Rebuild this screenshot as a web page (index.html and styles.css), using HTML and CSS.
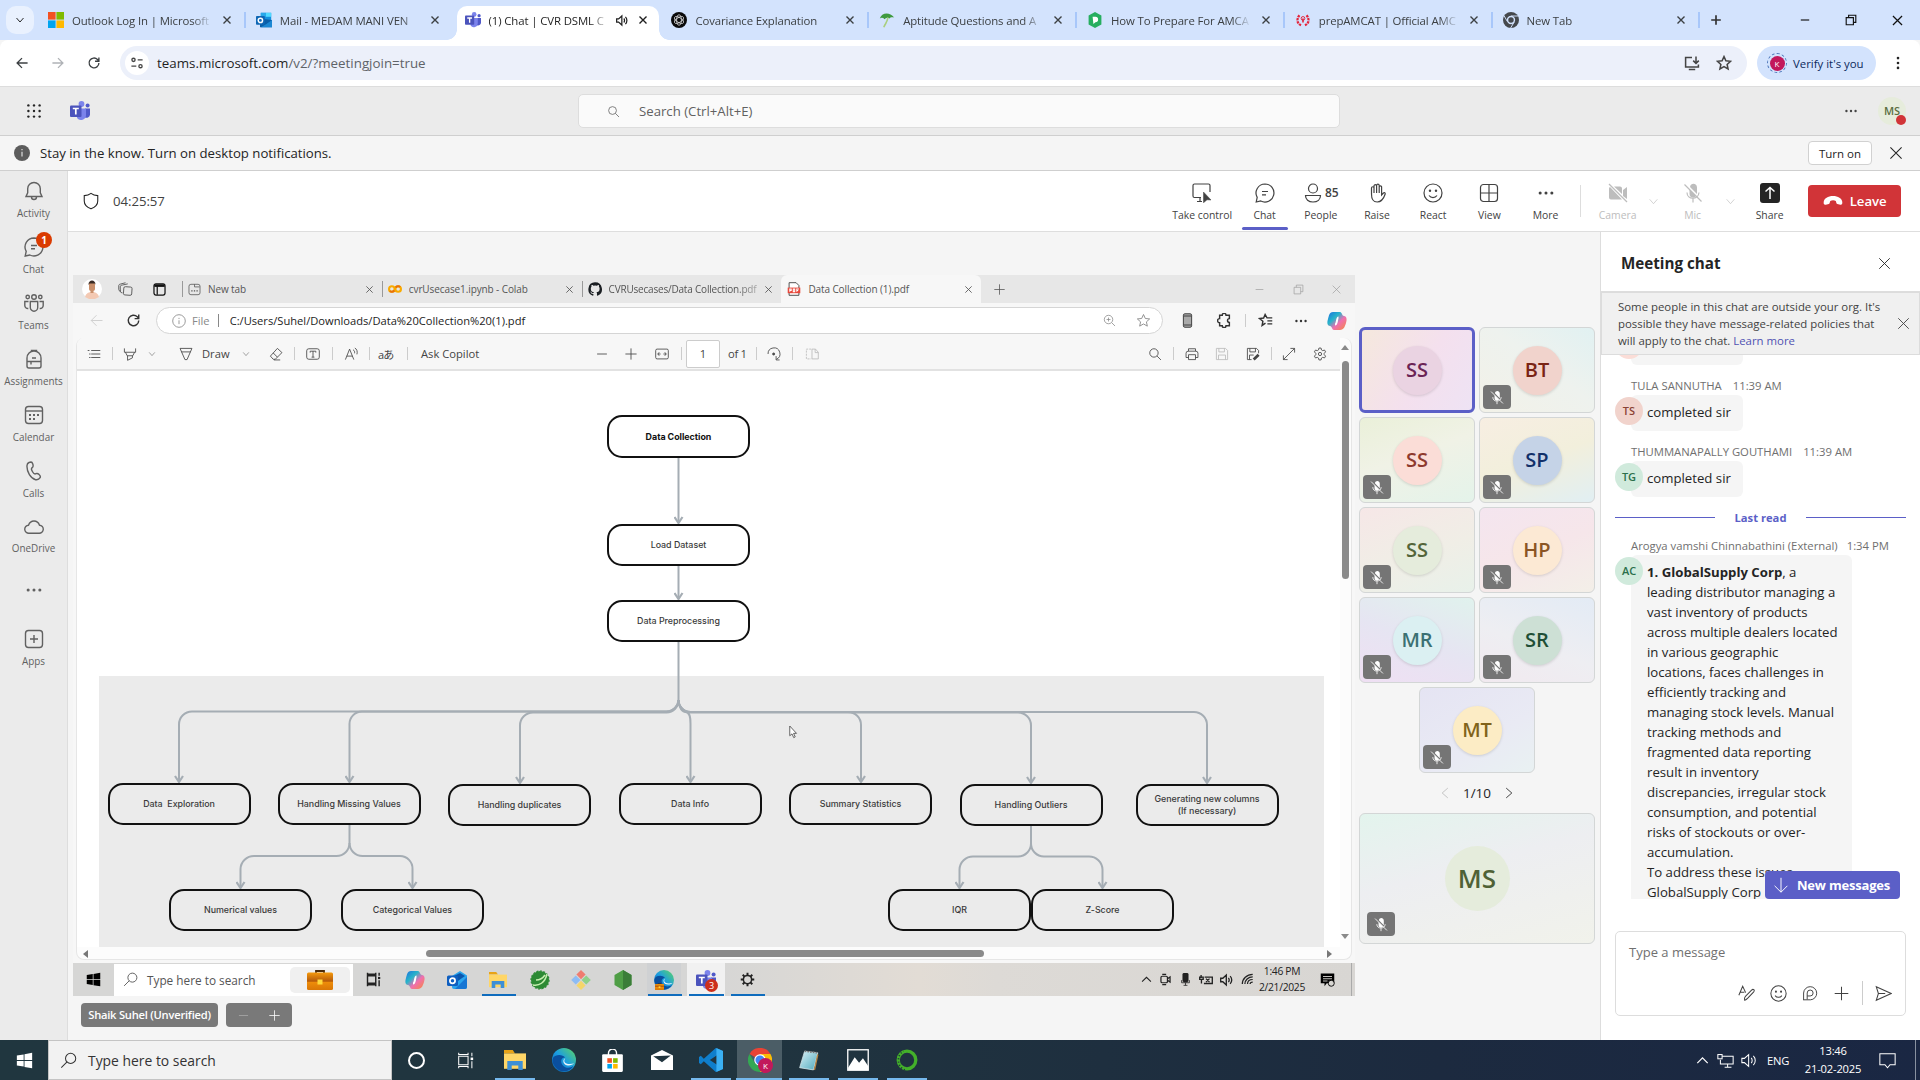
FILE: index.html
```html
<!DOCTYPE html>
<html lang="en">
<head>
<meta charset="utf-8">
<title>(1) Chat | CVR DSML | Microsoft Teams</title>
<link rel="stylesheet" href="styles.css">
</head>
<body>
<svg class="sprite" aria-hidden="true">
  <linearGradient id="cop" x1="0" y1="0" x2="1" y2="1"><stop offset="0" stop-color="#1b6fe0"/><stop offset=".35" stop-color="#27b5c9"/><stop offset=".6" stop-color="#f06fb0"/><stop offset="1" stop-color="#f58a3c"/></linearGradient>
  <linearGradient id="edg" x1="0" y1="1" x2="1" y2="0"><stop offset="0" stop-color="#0c59a4"/><stop offset=".5" stop-color="#1b9de2"/><stop offset="1" stop-color="#5fd85f"/></linearGradient>
  <linearGradient id="bag" x1="0" y1="0" x2="0" y2="1"><stop offset="0" stop-color="#f59a0c"/><stop offset=".5" stop-color="#b5590a"/><stop offset=".55" stop-color="#ee8d0a"/><stop offset="1" stop-color="#d97706"/></linearGradient>
  <linearGradient id="pad" x1="0" y1="0" x2="1" y2="1"><stop offset="0" stop-color="#d8f1f6"/><stop offset="1" stop-color="#4fa9bd"/></linearGradient>
  <symbol id="x" viewBox="0 0 20 20"><path d="M3 3l14 14M17 3L3 17"/></symbol>
  <symbol id="plus" viewBox="0 0 20 20"><path d="M10 2v16M2 10h16"/></symbol>
  <symbol id="minus" viewBox="0 0 20 20"><path d="M3 10h14"/></symbol>
  <symbol id="down" viewBox="0 0 20 20"><path d="M3 6l7 8 7-8"/></symbol>
  <symbol id="up" viewBox="0 0 20 20"><path d="M2 14l8-8 8 8"/></symbol>
  <symbol id="left" viewBox="0 0 20 20"><path d="M14 3L6 10l8 7"/></symbol>
  <symbol id="right" viewBox="0 0 20 20"><path d="M6 3l8 7-8 7"/></symbol>
  <symbol id="back" viewBox="0 0 20 20"><path d="M18 10H3M10 3l-7 7 7 7"/></symbol>
  <symbol id="fwd" viewBox="0 0 20 20"><path d="M2 10h15M10 3l7 7-7 7"/></symbol>
  <symbol id="reload" viewBox="0 0 20 20"><path d="M17 10a7 7 0 1 1-2-5l2 2M17 2v5.500h-5.500"/></symbol>
  <symbol id="search" viewBox="0 0 20 20"><circle cx="8.500" cy="8.500" r="6"/><path d="M13 13l5.500 5.500"/></symbol>
  <symbol id="wsearch" viewBox="0 0 20 20"><circle cx="12.500" cy="7.500" r="6"/><path d="M8.300 11.700L1.500 18.500"/></symbol>
  <symbol id="dots" viewBox="0 0 20 20"><g fill="currentColor" stroke="none"><circle cx="3.500" cy="10" r="1.700"/><circle cx="10" cy="10" r="1.700"/><circle cx="16.500" cy="10" r="1.700"/></g></symbol>
  <symbol id="vdots" viewBox="0 0 20 20"><g fill="currentColor" stroke="none"><circle cx="10" cy="3" r="1.900"/><circle cx="10" cy="10" r="1.900"/><circle cx="10" cy="17" r="1.900"/></g></symbol>
  <symbol id="star" viewBox="0 0 20 20"><path d="M10 2l2.400 5.300 5.800.6-4.300 3.900 1.200 5.700L10 14.600l-5.100 2.900 1.200-5.700L1.800 7.900l5.800-.6z"/></symbol>
  <symbol id="win" viewBox="0 0 20 20"><path fill="currentColor" stroke="none" d="M1 4l8-1.200v6.700H1zM10 2.600L19 1v8.500h-9zM1 10.500h8v6.700L1 16zM10 10.500h9V19l-9-1.400z"/></symbol>
  <symbol id="ms" viewBox="0 0 20 20"><g stroke="none"><path fill="#f25022" d="M0 0h9.500v9.500H0z"/><path fill="#7fba00" d="M10.500 0H20v9.500h-9.500z"/><path fill="#00a4ef" d="M0 10.500h9.500V20H0z"/><path fill="#ffb900" d="M10.500 10.500H20V20h-9.500z"/></g></symbol>
  <symbol id="outlook" viewBox="0 0 20 20"><g stroke="none"><path fill="#1490df" d="M6 1h13v9H6z"/><path fill="#28a8ea" d="M6 1h6.500v5H6z"/><path fill="#50d9ff" d="M12.500 1H19v5h-6.500z"/><path fill="#0a5ea8" d="M5 8l15 2v9H5z"/><path fill="#1b87d3" d="M20 10v9H6l7-4z"/><rect y="5" width="11" height="11" rx="1" fill="#0f67b5"/></g><circle cx="5.500" cy="10.500" r="2.700" stroke="#fff" stroke-width="1.800"/></symbol>
  <symbol id="outlook2" viewBox="0 0 20 20"><g stroke="none"><path fill="#2aa5ee" d="M5 6l8-5 7 4.500V17a2 2 0 0 1-2 2H7a2 2 0 0 1-2-2z"/><path fill="#0b56ad" d="M5 7l8-4 5 3-10 7z"/><path fill="#1676d4" d="M20 7v10a2 2 0 0 1-2 2H8z"/><rect y="5.500" width="11" height="10.500" rx="1.500" fill="#0f5fc0"/></g><circle cx="5.500" cy="10.700" r="2.600" stroke="#fff" stroke-width="1.700"/></symbol>
  <symbol id="teams" viewBox="0 0 20 20"><g stroke="none"><circle cx="17.600" cy="4.600" r="2" fill="#5059c9"/><circle cx="11.500" cy="3" r="2.900" fill="#7b83eb"/><path fill="#5059c9" d="M15 7.500h5v6a3.500 3.500 0 0 1-5 3z"/><path fill="#7b83eb" d="M8 7.500h8v6.500a5 5 0 0 1-9 3z"/><rect y="4.500" width="11.500" height="11.500" rx="1" fill="#4b53bc"/></g><path stroke="#fff" stroke-width="1.700" d="M2.800 7.500h6M5.800 7.500v6"/></symbol>
  <symbol id="gpt" viewBox="0 0 20 20"><circle cx="10" cy="10" r="10" fill="#0b0b0b" stroke="none"/><g stroke="#d8d8d8" stroke-width="1"><ellipse cx="10" cy="10" rx="3" ry="6.500"/><ellipse cx="10" cy="10" rx="3" ry="6.500" transform="rotate(60 10 10)"/><ellipse cx="10" cy="10" rx="3" ry="6.500" transform="rotate(120 10 10)"/></g></symbol>
  <symbol id="umb" viewBox="0 0 20 20"><path fill="#3f9a3f" stroke="none" d="M1 8C3 1 13-1 19 7c-3-1-5 0-6 1-2-1-4-1-6 1-2-2-4-2-6-1z"/><path stroke="#a9cf7f" stroke-width="2" d="M11 7c0 5-3 7-5 12"/></symbol>
  <symbol id="prep" viewBox="0 0 20 20"><path fill="#27ae60" stroke="none" d="M10 0l8 4.500v11L10 20l-8-4.500v-11z"/><path fill="#fff" stroke="none" d="M7 6h3.500a3.400 3.400 0 0 1 0 6.800L8 15z"/></symbol>
  <symbol id="amcat" viewBox="0 0 20 20"><path stroke="#e3243b" stroke-width="2.800" stroke-dasharray="3 1" d="M5.500 4c-4 5-3 11 3 13M14.500 4c4 5 3 11-3 13"/><path stroke="#e3243b" stroke-width="2" d="M10 13V8"/><circle cx="10" cy="8" r="2.300" stroke="#e3243b"/></symbol>
  <symbol id="chromeg" viewBox="0 0 20 20"><circle cx="10" cy="10" r="10" fill="#45484c" stroke="none"/><circle cx="10" cy="10" r="4.300" stroke="#d3e3fd" stroke-width="1.800" fill="#45484c"/><path stroke="#d3e3fd" d="M10 5h9M5.500 12L1.500 5M14 12.500L9.500 20"/></symbol>
  <symbol id="chrome" viewBox="0 0 20 20"><g stroke="none"><path fill="#ea4335" d="M10 10L1.300 5a10 10 0 0 1 17.400 0z"/><path fill="#34a853" d="M10 10v10A10 10 0 0 1 1.300 5l4.400 7.500z"/><path fill="#fbbc05" d="M14.300 12.500L10 20a10 10 0 0 0 8.700-15H10z"/><circle cx="10" cy="10" r="4.800" fill="#fff"/><circle cx="10" cy="10" r="3.800" fill="#4285f4"/></g></symbol>
  <symbol id="sound" viewBox="0 0 20 20"><path d="M1 7.500h3L9 3v14l-5-4.500H1zM12 7c1.500 1.500 1.500 4.500 0 6M14.500 4.500c3 3 3 8 0 11"/></symbol>
  <symbol id="restore" viewBox="0 0 20 20"><path d="M2 6h12v12H2zM6 6V2h12v12h-4"/></symbol>
  <symbol id="tune" viewBox="0 0 20 20"><circle cx="5" cy="5.500" r="2.300"/><path d="M11 5.500h7M2 14.500h7"/><circle cx="15" cy="14.500" r="2.300"/></symbol>
  <symbol id="install" viewBox="0 0 20 20"><path d="M10 3H2v12h16v-3M6 18h8M15 2v8M11.500 7l3.500 3.500L18.500 7"/></symbol>
  <symbol id="waffle" viewBox="0 0 20 20"><g fill="currentColor" stroke="none"><circle cx="3" cy="3" r="1.500"/><circle cx="10" cy="3" r="1.500"/><circle cx="17" cy="3" r="1.500"/><circle cx="3" cy="10" r="1.500"/><circle cx="10" cy="10" r="1.500"/><circle cx="17" cy="10" r="1.500"/><circle cx="3" cy="17" r="1.500"/><circle cx="10" cy="17" r="1.500"/><circle cx="17" cy="17" r="1.500"/></g></symbol>
  <symbol id="infof" viewBox="0 0 20 20"><circle cx="10" cy="10" r="10" fill="#5c5c5c" stroke="none"/><path stroke="#ddd" stroke-width="1.500" d="M10 8.500v6M10 5v1.700"/></symbol>
  <symbol id="info" viewBox="0 0 20 20"><circle cx="10" cy="10" r="9"/><path d="M10 9v5.500M10 5.500v1.700"/></symbol>
  <symbol id="bell" viewBox="0 0 20 20"><path d="M10 1.500a6.300 6.300 0 0 0-6.300 6.300v4L2 15.500h16l-1.700-3.700v-4A6.300 6.300 0 0 0 10 1.500zM7.500 16a2.500 2.500 0 0 0 5 0"/></symbol>
  <symbol id="chat" viewBox="0 0 20 20"><path d="M10 1a9 9 0 1 1-4.200 17L1.200 19l1-4.600A9 9 0 0 1 10 1zM7 8.500h6M7 11.800h4"/></symbol>
  <symbol id="people3" viewBox="0 0 20 20"><circle cx="10" cy="4" r="2.300"/><circle cx="3.700" cy="4" r="1.700"/><circle cx="16.300" cy="4" r="1.700"/><path d="M6.300 8.500h7.400v6a3.700 3.700 0 0 1-7.400 0zM4.500 8.500H.8v4c0 2 1.500 3.200 3.500 3M15.500 8.500h3.700v4c0 2-1.500 3.200-3.500 3"/></symbol>
  <symbol id="pack" viewBox="0 0 20 20"><path d="M3 9a7 7 0 0 1 14 0v8a2 2 0 0 1-2 2H5a2 2 0 0 1-2-2zM3 12.500h14M7 12.500v3M8 9h4M7.500 3V1.500h5V3"/></symbol>
  <symbol id="cal" viewBox="0 0 20 20"><rect x="1.500" y="1.500" width="17" height="17" rx="3"/><path d="M1.500 6h17"/><path stroke-dasharray="2 2" stroke-width="2" d="M5 10h10M5 14h6"/></symbol>
  <symbol id="phone" viewBox="0 0 20 20"><path d="M5 1.500l2-.5c1 0 1.300.5 1.800 2 .5 1.700.7 2.500-.3 3.400-1.500 1.200-1.400 1.800.2 4.600 1.200 2 2 2.300 3.200 1.700 1.500-.7 2-.4 3.200.8 1.300 1.200 1.700 2 1 3.200-1 1.700-2.500 2.400-4.500 2C7 17.500 2.500 11 3 4.500c.1-1.500.7-2.500 2-3z"/></symbol>
  <symbol id="cloud" viewBox="0 0 20 20"><path d="M5 16.200a4 4 0 0 1-.5-8C5.500 5.500 7.500 4 10 4s4.500 1.500 5.500 4.200a4 4 0 0 1-.5 8z"/></symbol>
  <symbol id="apps" viewBox="0 0 20 20"><rect x="1.500" y="1.500" width="17" height="17" rx="3"/><path d="M10 6v8M6 10h8"/></symbol>
  <symbol id="shield" viewBox="0 0 20 20"><path d="M10 1.500c2 1.700 4.500 2.500 7.500 2.500v6c0 4-3 7-7.500 8.700C5.500 17 2.500 14 2.500 10V4c3 0 5.500-.8 7.500-2.500z"/></symbol>
  <symbol id="take" viewBox="0 0 20 20"><path d="M9 14.500H2.500a1.500 1.500 0 0 1-1.500-1.500V2.500A1.500 1.500 0 0 1 2.500 1h14A1.500 1.500 0 0 1 18 2.500V9M5 18.500h5M8 14.500v4"/><path fill="currentColor" d="M11.500 9l7.500 8-4-.2-3.500 3z" stroke-width=".5"/></symbol>
  <symbol id="person" viewBox="0 0 20 20"><circle cx="10" cy="5.500" r="4.500"/><path d="M2.500 12.500h15c0 4-3 6.500-7.500 6.500s-7.500-2.500-7.500-6.500z"/></symbol>
  <symbol id="hand" viewBox="0 0 20 20"><path d="M4.500 11V5a1.200 1.200 0 0 1 2.500 0V3a1.300 1.300 0 0 1 2.600 0v-.5a1.300 1.300 0 0 1 2.600 0V4a1.200 1.200 0 0 1 2.400 0v8l1.800-2c1-.8 2 0 1.800 1-1 3-3 8-8 8s-5.700-4-5.700-8zM7 5v5M9.600 3v7M12.200 4v6"/></symbol>
  <symbol id="smile" viewBox="0 0 20 20"><circle cx="10" cy="10" r="9"/><path d="M6 12.500c2 2.700 6 2.700 8 0"/><g fill="currentColor" stroke="none"><circle cx="7" cy="7.800" r="1.200"/><circle cx="13" cy="7.800" r="1.200"/></g></symbol>
  <symbol id="grid" viewBox="0 0 20 20"><rect x="1.500" y="1.500" width="17" height="17" rx="3"/><path d="M10 1.500v17M1.500 10h17"/></symbol>
  <symbol id="camoff" viewBox="0 0 20 20"><path fill="currentColor" stroke="none" d="M1 5.500a2 2 0 0 1 1-1.500L14 16.500H3a2 2 0 0 1-2-2zM6 3.500h6a2 2 0 0 1 2 2V11zM15 7l4-3v12l-4-3z"/><path d="M1 1l18 18"/></symbol>
  <symbol id="micoff" viewBox="0 0 20 20"><path fill="currentColor" stroke="none" d="M6.500 6.500L13 13c-2 3-6.500 1.500-6.500-2zM7 4c.7-4.500 7-4 7 .5V11z"/><path d="M1.500 1.500l17 17M4 9.500c0 7.500 11.500 7.500 12 0M10 15.500v4"/></symbol>
  <symbol id="share" viewBox="0 0 20 20"><rect width="20" height="20" rx="3" fill="currentColor" stroke="none"/><path stroke="#fff" stroke-width="1.500" d="M10 16V5M5.500 8.500L10 4.500l4.500 4"/></symbol>
  <symbol id="hang" viewBox="0 0 20 20"><path fill="currentColor" stroke="none" d="M10 5c5 0 9 2.500 9.300 6 .1 2-.4 3-2 2.700l-3-.8c-1.300-.5-1-2.300-1.500-3-1.500-.8-4-.8-5.500 0-.6.700-.2 2.500-1.500 3l-3 .8C1 14 .5 13 .7 11 1 7.500 5 5 10 5z"/></symbol>
  <symbol id="coll" viewBox="0 0 20 20"><rect x="7.500" y="6.500" width="11" height="11" rx="2" transform="rotate(4 13 12)"/><path d="M6 14.500L4 14a2 2 0 0 1-1-2V6.500c0-2 1-2 3-2.500l7-1.500M4 12H2.500a2 2 0 0 1-1.500-2V5c0-1.500 1-2 2.500-2.300L10 1"/></symbol>
  <symbol id="vtab" viewBox="0 0 20 20"><rect x="1.500" y="1.500" width="17" height="17" rx="3"/><path stroke-width="4" d="M2 4h16"/><path d="M6.500 5v13"/></symbol>
  <symbol id="ntab" viewBox="0 0 20 20"><rect x="1.500" y="2" width="17" height="16" rx="3"/><path d="M10 2v4h8"/><path stroke-width="2" stroke-dasharray="2 2" d="M5 12h11"/></symbol>
  <symbol id="colab" viewBox="0 0 20 20"><g stroke-width="3"><circle cx="14.500" cy="10" r="4" stroke="#f9ab00"/><circle cx="5.500" cy="10" r="4" stroke="#f9ab00"/><path stroke="#e8710a" d="M2.700 12.800A4 4 0 0 0 9 12M11 8a4 4 0 0 1 6.300-.8"/></g></symbol>
  <symbol id="gh" viewBox="0 0 20 20"><path fill="#1b1f23" stroke="none" d="M10 .5a9.800 9.800 0 0 0-3 19c.5 0 .7-.2.7-.5v-2c-2.700.6-3.300-1.200-3.300-1.200-.5-1-1-1.400-1-1.400-1-.6 0-.6 0-.6 1 0 1.500 1 1.500 1 1 1.600 2.400 1.100 3 .9 0-.7.300-1.100.6-1.300-2.200-.3-4.500-1.100-4.500-4.900 0-1 .4-2 1-2.600 0-.3-.4-1.300.1-2.600 0 0 .8-.3 2.700 1a9 9 0 0 1 5 0c1.900-1.300 2.700-1 2.700-1 .5 1.300.1 2.300.1 2.600.6.700 1 1.600 1 2.600 0 3.800-2.300 4.600-4.500 4.900.3.300.7.900.7 1.800V19c0 .3.200.6.700.5A9.800 9.800 0 0 0 10 .5z"/></symbol>
  <symbol id="pdf" viewBox="0 0 20 20"><path stroke="#333" fill="#fff" d="M3 1h10l4 4v14H3z"/><path fill="#e8483b" stroke="none" d="M1 8h18v8H1z"/><path stroke="#fff" stroke-width="1.500" d="M4 14v-4h2v2H4M9 10h2v4H9zM14 14v-4h3M14 12h2"/></symbol>
  <symbol id="zoomin" viewBox="0 0 20 20"><circle cx="8.500" cy="8.500" r="6.500"/><path d="M13.500 13.500l5 5M8.500 5.500v6M5.500 8.500h6"/></symbol>
  <symbol id="mobile" viewBox="0 0 20 20"><rect x="4.500" y="1" width="11" height="18" rx="2" fill="#aaa"/><path d="M5 4h10M5 16h10"/></symbol>
  <symbol id="puzzle" viewBox="0 0 20 20"><path d="M7 3a2.500 2.500 0 0 1 5 0h4.500v4.500a2.500 2.500 0 0 0 0 5V17H12a2.500 2.500 0 0 1-5 0H3.500v-4a2.500 2.500 0 0 1 0-5.500V3z"/></symbol>
  <symbol id="favs" viewBox="0 0 20 20"><path d="M10 13.500l-4.500 3 1-5.500L2 7.500l5.500-.8L9.500 2 12 6.500h7M12.500 10.500H19M12.500 14.500H19"/></symbol>
  <symbol id="copilot" viewBox="0 0 20 20"><path fill="url(#cop)" stroke="none" d="M6 1h7c2 0 2 4 4 4 3 0 3 4 2 7s-2 7-6 7H7c-2 0-2-4-4-4-3 0-3-4-2-7s1-7 5-7z"/><path stroke="#fff" stroke-width="2" d="M11.500 6.500c-2 0-1 7-3.500 7"/></symbol>
  <symbol id="toc" viewBox="0 0 20 20"><path d="M6 5h13M6 10h13M6 15h13M1 5h2.500M3 10h2M3 15h2"/></symbol>
  <symbol id="hl" viewBox="0 0 20 20"><path d="M2 2v5.500h16V2M3.500 7.500l2.500 5h8l2.500-5M6.500 12.500V19l7-3.500v-3"/></symbol>
  <symbol id="pen" viewBox="0 0 20 20"><path d="M1.500 2h17L11.500 18h-3zM3.500 7h13"/></symbol>
  <symbol id="erase" viewBox="0 0 20 20"><path d="M12 2l6.500 6L9 17.500H6L2 13zM6 8.500l6 6M7 18.500h9"/></symbol>
  <symbol id="tbox" viewBox="0 0 20 20"><rect x="1" y="2.500" width="18" height="15" rx="3"/><path d="M6 8V6h8v2M10 6v8.500M8 14.500h4"/></symbol>
  <symbol id="aloud" viewBox="0 0 20 20"><path d="M2 18L8 3l6 15M4 13h8M13 4c2 1 2.500 3 2 5M15.500 1.500c3 1.500 4 5 3 9"/></symbol>
  <symbol id="fit" viewBox="0 0 20 20"><rect x="1" y="3" width="18" height="14" rx="2"/><path d="M8 10H4M12 10h4M6 7.500L4 10l2 2.500M14 7.500l2 2.500-2 2.500"/></symbol>
  <symbol id="rot" viewBox="0 0 20 20"><path d="M1.500 10a8.500 8.500 0 1 1 12 7.500M13 13v5.500h5"/><circle cx="9.500" cy="10" r="1.500" fill="currentColor"/></symbol>
  <symbol id="pages" viewBox="0 0 20 20"><path stroke-dasharray="3 1.500" d="M9 3H2v14h7"/><path d="M10 3h5l4 4.500V17h-9zM14.500 3v5H19"/></symbol>
  <symbol id="print" viewBox="0 0 20 20"><path d="M5 6V2.500h10V6M5 15H1.500V9a3 3 0 0 1 3-3h11a3 3 0 0 1 3 3v6H15M5 11h10v7H5z"/></symbol>
  <symbol id="save" viewBox="0 0 20 20"><path d="M2 2h13l3 3v13H2zM5.500 2v5h8V2M5 18v-6.500h10V18"/></symbol>
  <symbol id="savep" viewBox="0 0 20 20"><path d="M8 18H2V2h13l3 3v4M5.500 2v5h8V2M5 18v-6.500h6"/><path stroke-width="4" d="M11 18l7-7"/></symbol>
  <symbol id="expand" viewBox="0 0 20 20"><path d="M12 2h6v6M18 2L2 18M2 12v6h6"/></symbol>
  <symbol id="gear" viewBox="0 0 20 20"><path d="M8.500 1.500h3l.6 2.700 1.700 1 2.700-.8 1.500 2.600-2 2v2l2 2-1.500 2.600-2.700-.8-1.700 1-.6 2.700h-3l-.6-2.700-1.700-1-2.700.8L2 13l2-2V9L2 7l1.500-2.600 2.700.8 1.700-1z"/><circle cx="10" cy="10" r="2.300"/></symbol>
  <symbol id="cog" viewBox="0 0 20 20"><circle cx="10" cy="10" r="5.500" stroke-width="2"/><path stroke-width="2.600" d="M10 4.500V1M10 15.500V19M4.500 10H1M15.500 10H19M6.100 6.100L3.600 3.600M13.900 13.900l2.500 2.500M13.900 6.100l2.500-2.500M6.100 13.900l-2.500 2.500"/></symbol>
  <symbol id="brief" viewBox="0 0 26 20"><path stroke="#4b2b0a" stroke-width="1.800" d="M9 3V1h8v2"/><rect y="2.500" width="26" height="17.500" rx="1.500" fill="url(#bag)" stroke="none"/><rect x="10.500" y="9.500" width="5" height="5" fill="#ffd93b" stroke="none"/></symbol>
  <symbol id="tview" viewBox="0 0 20 20"><path d="M2 5h11v10H2zM2 1v2h11V1M2 19v-2h11v2M17.500 1v4M17.500 11v8"/><path stroke-width="3" d="M17.500 6.500v3"/></symbol>
  <symbol id="folder" viewBox="0 0 20 20"><g stroke="none"><path fill="#e8a317" d="M0 1h8l2 3H0z"/><path fill="#ffd667" d="M0 4h20v14H0z"/><path fill="#3d8fd6" d="M3 19v-8h14v8h-4v-4H7v4z"/></g></symbol>
  <symbol id="leaf" viewBox="0 0 20 20"><circle cx="10" cy="10" r="9" fill="#2d8a34" stroke="#2d8a34" stroke-dasharray="2 1.500"/><path stroke="#c7efb0" stroke-width="1.500" d="M3 15c6 1 12-2 14-11M6 10c4 0 7-2 9-5"/></symbol>
  <symbol id="git" viewBox="0 0 20 20"><g stroke="none"><path fill="#ef7c6f" d="M10 0l4.600 4.600-4.600 4.600-4.600-4.600z"/><path fill="#8dbcf5" d="M4.800 5.400L9.400 10l-4.600 4.600L.2 10z"/><path fill="#8fd18a" d="M15.200 5.400l4.600 4.600-4.600 4.600-4.600-4.600z"/><path fill="#f5d66a" d="M10 10.800l4.600 4.600L10 20l-4.600-4.600z"/></g></symbol>
  <symbol id="node" viewBox="0 0 20 20"><path fill="#4f9e46" stroke="none" d="M10 0l8.500 5v10L10 20l-8.500-5V5z"/><path fill="#3b7d38" stroke="none" d="M10 0l8.500 5v10L10 20z"/></symbol>
  <symbol id="edge" viewBox="0 0 20 20"><circle cx="10" cy="10" r="10" fill="url(#edg)" stroke="none"/><path fill="#0a4f9e" stroke="none" d="M1 8c2-3 8-3 10 0-4 0-5 5 0 8 3 1 5 0 7-1-3 5-10 6-14 2S0 11 1 8z"/><path fill="#e8f4fb" stroke="none" d="M11 8.500c-2 3 0 6 7.500 4.500-3 2.500-9 2-9-2 0-1 .5-2 1.500-2.500z"/></symbol>
  <symbol id="store" viewBox="0 0 20 20"><path stroke="#fff" d="M6.500 6V3.500a3.500 3.500 0 0 1 7 0V6"/><rect x="1" y="4.500" width="18" height="15.500" rx="1" fill="#fff" stroke="none"/><g stroke="none"><path fill="#f25022" d="M5.500 8h4v4h-4z"/><path fill="#7fba00" d="M10.500 8h4v4h-4z"/><path fill="#00a4ef" d="M5.500 13h4v4h-4z"/><path fill="#ffb900" d="M10.500 13h4v4h-4z"/></g></symbol>
  <symbol id="mail" viewBox="0 0 20 20"><path fill="#fff" stroke="none" d="M0 6l10-5 10 5v13H0z"/><path fill="#20343f" stroke="none" d="M2 6.500l16-.5-8 6z"/></symbol>
  <symbol id="vs" viewBox="0 0 20 20"><path fill="#0f7ecb" stroke="none" d="M14 0l6 2.500v15L14 20 4 11 1.500 13.500 0 12.500v-5l1.500-1L4 9zM15 6l-6 4 6 4z" fill-rule="evenodd"/><path fill="#3bb0f3" stroke="none" d="M14.500 0L20 2.500v15L14.500 20z"/></symbol>
  <symbol id="note" viewBox="0 0 20 20"><path fill="url(#pad)" stroke="#d7e6ea" stroke-width=".7" d="M6 2l12 1.500L14 19 1.500 17z"/><path stroke="#777" stroke-width="1.500" stroke-dasharray="1.500 1" d="M6 2l12 1.500"/><path stroke="#b98745" d="M18 5l-3 14"/></symbol>
  <symbol id="photo" viewBox="0 0 20 20"><rect x=".7" y=".7" width="18.600" height="18.600" stroke="#fff"/><path fill="#fff" stroke="none" d="M1 17l6-9.500 4 5 3.500-4 5 7.500v3H1z"/></symbol>
  <symbol id="ana" viewBox="0 0 20 20"><circle cx="10" cy="10" r="8" stroke="#43b02a" stroke-width="3"/><path stroke="#20343f" stroke-width="1.500" stroke-dasharray="1 2" d="M8 19C1 17 0 5 7 2"/></symbol>
  <symbol id="camc" viewBox="0 0 20 20"><rect x="3" y="5" width="10" height="10" rx="2"/><path d="M13 9l4-3v8l-4-3M5 2h6M5 18h6"/></symbol>
  <symbol id="micf" viewBox="0 0 20 20"><rect x="6" y="0" width="8" height="14" rx="2" fill="currentColor"/><path d="M4 11v4h12v-4M10 15v4M7 19h6"/></symbol>
  <symbol id="batt" viewBox="0 0 20 20"><path d="M8 6h11v9H7M10 8l5 5M15 8l-5 5M3 3v4M1 6h5v3H1zM3.500 9v6"/></symbol>
  <symbol id="wifi" viewBox="0 0 20 20"><path d="M2 17C2 9 9 2 18 2M6 17c0-6 5-11 12-11M10 17c0-4 3-7 8-7M14 17c0-2 2-3 4-3"/></symbol>
  <symbol id="net" viewBox="0 0 20 20"><path d="M6 5h13v9H4V9M9 18h8M12.500 14v4"/><rect x="1" y="3" width="5" height="5"/></symbol>
  <symbol id="notif" viewBox="0 0 20 20"><path d="M1 2h18v13h-6l-3 3.500L7 15H1z"/></symbol>
  <symbol id="notiff" viewBox="0 0 20 20"><path fill="currentColor" stroke="none" d="M1 2h18v13H9l-3 4v-4H1z"/><path stroke="#d8d6d2" d="M4 6h12M4 9h12M4 12h6"/><circle cx="15" cy="15" r="4" fill="#d8d6d2"/></symbol>
  <symbol id="fmt" viewBox="0 0 20 20"><path d="M1 12L5.500 1.500 9 9M2.500 8.500h5M8 18c-1-3 0-4 1-5l7-7c2-2 4 0 2.500 2l-7 7.500c-1 1-2 2-3.500 2.500z"/></symbol>
  <symbol id="loop" viewBox="0 0 20 20"><path d="M2 19V10a8.200 8.200 0 1 1 8.500 8.500H2M6.500 18V10a3.700 3.700 0 1 1 3.700 3.700H6.500"/></symbol>
  <symbol id="send" viewBox="0 0 20 20"><path d="M1.500 2l17.500 8L1.500 18l2.500-8zM4 10h8"/></symbol>
  <symbol id="arrdown" viewBox="0 0 20 20"><path d="M10 1v18M2 11l8 8 8-8"/></symbol>
</svg>

<header class="tabstrip">
  <span class="tab-menu"><svg class="i10 b2"><use href="#down"/></svg></span>
  <div class="tab"><svg class="i16"><use href="#ms"/></svg><span class="title">Outlook Log In | Microsoft</span><svg class="i10 b3"><use href="#x"/></svg></div>
  <div class="tab nosep"><svg class="i16"><use href="#outlook"/></svg><span class="title">Mail - MEDAM MANI VEN</span><svg class="i10 b3"><use href="#x"/></svg></div>
  <div class="tab active"><svg class="i16"><use href="#teams"/></svg><span class="title">(1) Chat | CVR DSML C</span><svg class="i13 b2"><use href="#sound"/></svg><svg class="i10 b3"><use href="#x"/></svg></div>
  <div class="tab"><svg class="i16"><use href="#gpt"/></svg><span class="title">Covariance Explanation</span><svg class="i10 b3"><use href="#x"/></svg></div>
  <div class="tab"><svg class="i16"><use href="#umb"/></svg><span class="title">Aptitude Questions and A</span><svg class="i10 b3"><use href="#x"/></svg></div>
  <div class="tab"><svg class="i16"><use href="#prep"/></svg><span class="title">How To Prepare For AMCA</span><svg class="i10 b3"><use href="#x"/></svg></div>
  <div class="tab"><svg class="i16"><use href="#amcat"/></svg><span class="title">prepAMCAT | Official AMC</span><svg class="i10 b3"><use href="#x"/></svg></div>
  <div class="tab"><svg class="i16"><use href="#chromeg"/></svg><span class="title">New Tab</span><svg class="i10 b3"><use href="#x"/></svg></div>
  <svg class="i12 b3 newtab"><use href="#plus"/></svg>
  <div class="winbtns"><svg class="i12 b2"><use href="#minus"/></svg><svg class="i12 b2"><use href="#restore"/></svg><svg class="i13 b2"><use href="#x"/></svg></div>
</header>

<div class="toolbar">
  <div class="nav"><svg class="i14 b2"><use href="#back"/></svg><svg class="i14 b2 dim"><use href="#fwd"/></svg><svg class="i14 b2"><use href="#reload"/></svg></div>
  <div class="omnibox"><span class="site"><svg class="i14 b2"><use href="#tune"/></svg></span><span class="url">teams.microsoft.com<i>/v2/?meetingjoin=true</i></span><span class="grow"></span><svg class="i16 b2"><use href="#install"/></svg><svg class="i16 b2"><use href="#star"/></svg></div>
  <div class="verify"><span class="kring"><b>K</b></span>Verify it's you</div>
  <svg class="i14 b2 kebab"><use href="#vdots"/></svg>
</div>

<div class="teamsbar">
  <svg class="i16 waffle"><use href="#waffle"/></svg>
  <svg class="i20 tlogo"><use href="#teams"/></svg>
  <div class="tsearch"><svg class="i13"><use href="#search"/></svg>Search (Ctrl+Alt+E)</div>
  <svg class="i14 tdots"><use href="#dots"/></svg>
  <span class="me">MS<i></i></span>
</div>

<div class="notice">
  <svg class="i16"><use href="#infof"/></svg><span>Stay in the know. Turn on desktop notifications.</span>
  <button>Turn on</button><svg class="i16"><use href="#x"/></svg>
</div>

<div class="app">
  <nav class="rail">
    <a><svg class="i20"><use href="#bell"/></svg>Activity</a>
    <a><svg class="i20"><use href="#chat"/></svg>Chat<b>1</b></a>
    <a><svg class="i20"><use href="#people3"/></svg>Teams</a>
    <a><svg class="i20"><use href="#pack"/></svg>Assignments</a>
    <a><svg class="i20"><use href="#cal"/></svg>Calendar</a>
    <a><svg class="i20"><use href="#phone"/></svg>Calls</a>
    <a class="od"><svg class="i20"><use href="#cloud"/></svg>OneDrive</a>
    <a class="more"><svg class="i18"><use href="#dots"/></svg></a>
    <a><svg class="i20"><use href="#apps"/></svg>Apps</a>
  </nav>

  <main class="meeting">
    <div class="callbar">
      <svg class="i18 shield"><use href="#shield"/></svg><span class="timer">04:25:57</span>
      <div class="ctl take"><svg class="i22"><use href="#take"/></svg>Take control</div>
      <div class="ctl on"><svg class="i20"><use href="#chat"/></svg>Chat</div>
      <div class="ctl"><span class="pp"><svg class="i20"><use href="#person"/></svg><b>85</b></span>People</div>
      <div class="ctl"><svg class="i20"><use href="#hand"/></svg>Raise</div>
      <div class="ctl"><svg class="i20"><use href="#smile"/></svg>React</div>
      <div class="ctl"><svg class="i20"><use href="#grid"/></svg>View</div>
      <div class="ctl"><svg class="i18"><use href="#dots"/></svg>More</div>
      <span class="vr"></span>
      <div class="ctl off cam"><svg class="i20"><use href="#camoff"/></svg>Camera</div><svg class="i11 chev"><use href="#down"/></svg>
      <div class="ctl off mic"><svg class="i20"><use href="#micoff"/></svg>Mic</div><svg class="i11 chev c2"><use href="#down"/></svg>
      <div class="ctl sh"><svg class="i20 shi"><use href="#share"/></svg>Share</div>
      <div class="leave"><svg class="i20"><use href="#hang"/></svg>Leave</div>
    </div>

    <div class="body">
      <section class="stage">
        <div class="left">
          <div class="shared">
            <div class="etabs">
              <span class="face"><svg viewBox="0 0 20 20"><circle cx="10" cy="10" r="10" fill="#fff"/><path fill="#f3c9b3" d="M3 18c1-4 4-5 7-5s6 1 7 5l-4 2H7z"/><path fill="#c98f6b" d="M7 4h6v6c0 3-6 3-6 0zM8.500 11h3v3h-3z"/><path fill="#3a2c26" d="M6.500 6c-.5-6 7.500-6 7 0L13 4.500H7.500z"/></svg></span>
              <span class="w30"><svg class="i15"><use href="#coll"/></svg></span>
              <span class="w42"><svg class="i13 b2 blk"><use href="#vtab"/></svg></span>
              <div class="etab"><svg class="i13"><use href="#ntab"/></svg><span>New tab</span><svg class="i9 b2"><use href="#x"/></svg></div>
              <div class="etab"><svg class="i14"><use href="#colab"/></svg><span>cvrUsecase1.ipynb - Colab</span><svg class="i9 b2"><use href="#x"/></svg></div>
              <div class="etab fade"><svg class="i14"><use href="#gh"/></svg><span>CVRUsecases/Data Collection.pdf</span><svg class="i9 b2"><use href="#x"/></svg></div>
              <div class="etab cur"><svg class="i14"><use href="#pdf"/></svg><span>Data Collection (1).pdf</span><svg class="i9 b2"><use href="#x"/></svg></div>
              <svg class="i13 eplus"><use href="#plus"/></svg>
              <div class="ewin"><svg class="i11"><use href="#minus"/></svg><svg class="i11"><use href="#restore"/></svg><svg class="i11"><use href="#x"/></svg></div>
            </div>
            <div class="eaddr">
              <svg class="i15 eback"><use href="#back"/></svg><svg class="i15 b2"><use href="#reload"/></svg>
              <div class="epill"><svg class="i14"><use href="#info"/></svg><em>File</em><s></s><span>C:/Users/Suhel/Downloads/Data%20Collection%20(1).pdf</span><svg class="i13 z"><use href="#zoomin"/></svg><svg class="i15"><use href="#star"/></svg></div>
              <svg class="i15 g17"><use href="#mobile"/></svg><svg class="i15 g22 b2"><use href="#puzzle"/></svg><u class="g13"></u><svg class="i15 g12 b2"><use href="#favs"/></svg><svg class="i14 g21 b2"><use href="#dots"/></svg><svg class="i20 g19"><use href="#copilot"/></svg>
            </div>
            <div class="doc">
              <div class="ptools">
                <svg class="g7"><use href="#toc"/></svg><u class="g8"></u><svg class="g7"><use href="#hl"/></svg><svg class="g7 tiny"><use href="#down"/></svg><svg class="g19"><use href="#pen"/></svg><span class="g6 draw">Draw</span><svg class="tiny"><use href="#down"/></svg><svg class="g15"><use href="#erase"/></svg><u class="g8"></u><svg class="g8"><use href="#tbox"/></svg><u class="g9"></u><svg class="g8"><use href="#aloud"/></svg><u class="g8"></u><span class="g8 trans">aあ</span><u class="g9"></u><span class="g13 ask">Ask Copilot</span>
                <svg class="g111"><use href="#minus"/></svg><svg class="g9"><use href="#plus"/></svg><svg class="g11"><use href="#fit"/></svg><u class="g9"></u><span class="g4 pg">1</span><span class="g8 of">of 1</span><u class="g8"></u><svg class="g7"><use href="#rot"/></svg><u class="g8"></u><svg class="g9 fainti"><use href="#pages"/></svg>
                <svg class="g323"><use href="#search"/></svg><u class="g8"></u><svg class="g8"><use href="#print"/></svg><svg class="g10 fainti"><use href="#save"/></svg><svg class="g11"><use href="#savep"/></svg><u class="g8"></u><svg class="g7"><use href="#expand"/></svg><svg class="g11"><use href="#gear"/></svg>
              </div>
              <div class="vscroll"><i class="ua"></i><b></b><i class="da"></i></div>
              <div class="page">
                <div class="band"></div>
                <svg class="wires" viewBox="77 371 1262 576" width="1262" height="576">
                  <defs><marker id="ah" viewBox="0 0 10 10" refX="8.500" refY="5" markerWidth="10" markerHeight="10" markerUnits="userSpaceOnUse" orient="auto"><path d="M2.500 1l6 4-6 4" fill="none" stroke="#a5adb4" stroke-width="2.200"/></marker></defs>
                  <g fill="none" stroke="#a5adb4" stroke-width="2" marker-end="url(#ah)">
                    <path d="M678.500 458V523"/><path d="M678.500 565V599"/>
                    <path d="M678.500 641V699a12 12 0 0 1-12 12.500H192a13 13 0 0 0-13 13V782"/>
                    <path d="M678.500 700a12 12 0 0 1-12 11.500H362a12.500 12.500 0 0 0-12.500 13V782"/>
                    <path d="M678.500 700a12 12 0 0 1-12 12.500H533a13 13 0 0 0-13 13V783"/>
                    <path d="M678.500 700c0 8 4 12 7 12 4 0 5 4 5 12V782"/>
                    <path d="M678.500 700a12 12 0 0 0 12 12H848a13 13 0 0 1 13 13V782"/>
                    <path d="M678.500 700a12 12 0 0 0 12 12.500H1018a13 13 0 0 1 13 13V783"/>
                    <path d="M678.500 700a12 12 0 0 0 12 12H1194a13 13 0 0 1 13 13V783"/>
                    <path d="M349.500 824v19a13 13 0 0 1-13 13H254a13.500 13.500 0 0 0-13.500 13V888"/>
                    <path d="M349.500 843a13 13 0 0 0 13 13H400a12.500 12.500 0 0 1 12.500 13V888"/>
                    <path d="M1031 825v18a13 13 0 0 1-13 13.500H973a13.500 13.500 0 0 0-13.500 13V888"/>
                    <path d="M1031 843a13 13 0 0 0 13 13.500H1089a13.500 13.500 0 0 1 13.500 13V888"/>
                  </g>
                </svg>
                <div class="nd n1"><b>Data Collection</b></div><div class="nd n2">Load Dataset</div><div class="nd n3">Data Preprocessing</div>
                <div class="nd n4">Data&nbsp; Exploration</div><div class="nd n5">Handling Missing Values</div><div class="nd n6">Handling duplicates</div><div class="nd n7">Data Info</div><div class="nd n8">Summary Statistics</div><div class="nd n9">Handling Outliers</div><div class="nd n10">Generating new columns<br>(If necessary)</div>
                <div class="nd n11">Numerical values</div><div class="nd n12">Categorical Values</div><div class="nd n13">IQR</div><div class="nd n14">Z-Score</div>
                <svg class="cursor" viewBox="0 0 12 18"><path d="M1 1v13l3-2.500 2.300 5 2-1-2.200-4.700H10z" fill="#fff" stroke="#555"/></svg>
              </div>
              <div class="hscroll"><i class="la"></i><b></b><i class="ra"></i></div>
            </div>
            <div class="ibar">
              <span class="istart"><svg class="i15"><use href="#win"/></svg></span>
              <div class="isearch"><svg class="i15"><use href="#wsearch"/></svg>Type here to search<span><svg class="bf"><use href="#brief"/></svg></span></div>
              <span><svg class="i15 b2"><use href="#tview"/></svg></span><span><svg class="i20"><use href="#copilot"/></svg></span><span><svg class="i20"><use href="#outlook2"/></svg></span><span class="ul"><svg class="i18"><use href="#folder"/></svg></span><span><svg class="i20"><use href="#leaf"/></svg></span><span><svg class="i20"><use href="#git"/></svg></span><span><svg class="i20"><use href="#node"/></svg></span><span class="ul lit"><svg class="i20"><use href="#edge"/></svg><svg class="minib"><use href="#brief"/></svg></span><span class="ul lit2"><svg class="i20"><use href="#teams"/></svg><b>3</b></span><span class="ul"><svg class="i15"><use href="#cog"/></svg></span>
              <div class="itray"><svg class="i11 b2"><use href="#up"/></svg><svg class="i13 b2"><use href="#camc"/></svg><svg class="i13"><use href="#micf"/></svg><svg class="i14 b2"><use href="#batt"/></svg><svg class="i14 b2"><use href="#sound"/></svg><svg class="i13 b2"><use href="#wifi"/></svg><p>1:46 PM<br>2/21/2025</p><svg class="i15 nf"><use href="#notiff"/></svg></div>
            </div>
          </div>
          <div class="tags"><span class="who">Shaik Suhel (Unverified)</span><span class="zm"><svg class="i13 dim2"><use href="#minus"/></svg><svg class="i13"><use href="#plus"/></svg></span></div>
        </div>

        <aside class="tiles">
          <div class="tile t1"><span>SS</span></div>
          <div class="tile t2"><span>BT</span><i><svg><use href="#micoff"/></svg></i></div>
          <div class="tile t3"><span>SS</span><i><svg><use href="#micoff"/></svg></i></div>
          <div class="tile t4"><span>SP</span><i><svg><use href="#micoff"/></svg></i></div>
          <div class="tile t5"><span>SS</span><i><svg><use href="#micoff"/></svg></i></div>
          <div class="tile t6"><span>HP</span><i><svg><use href="#micoff"/></svg></i></div>
          <div class="tile t7"><span>MR</span><i><svg><use href="#micoff"/></svg></i></div>
          <div class="tile t8"><span>SR</span><i><svg><use href="#micoff"/></svg></i></div>
          <div class="tile t9"><span>MT</span><i><svg><use href="#micoff"/></svg></i></div>
          <div class="pager"><svg class="i14 dim3"><use href="#left"/></svg>1/10<svg class="i14"><use href="#right"/></svg></div>
          <div class="tile t10"><span>MS</span><i><svg><use href="#micoff"/></svg></i></div>
        </aside>
      </section>

      <section class="chat">
        <div class="chead">Meeting chat<svg class="i15"><use href="#x"/></svg></div>
        <div class="banner"><p>Some people in this chat are outside your org. It's<br>possible they have message-related policies that<br>will apply to the chat. <a>Learn more</a></p><svg class="i15"><use href="#x"/></svg></div>
        <div class="msgs">
          <div class="msg first"><span class="av pk"></span><div class="bub"></div></div>
          <div class="by">TULA SANNUTHA<time>11:39 AM</time></div>
          <div class="msg"><span class="av pk2">TS</span><div class="bub">completed sir</div></div>
          <div class="by">THUMMANAPALLY GOUTHAMI<time>11:39 AM</time></div>
          <div class="msg"><span class="av gr">TG</span><div class="bub">completed sir</div></div>
          <div class="lastread">Last read</div>
          <div class="by ext">Arogya vamshi Chinnabathini (External)<time>1:34 PM</time></div>
          <div class="msg"><span class="av gr">AC</span><div class="bub long"><b>1. GlobalSupply Corp</b>, a<br>leading distributor managing a<br>vast inventory of products<br>across multiple dealers located<br>in various geographic<br>locations, faces challenges in<br>efficiently tracking and<br>managing stock levels. Manual<br>tracking methods and<br>fragmented data reporting<br>result in inventory<br>discrepancies, irregular stock<br>consumption, and potential<br>risks of stockouts or over-<br>accumulation.<br>To address these issues,<br>GlobalSupply Corp</div></div>
          <div class="newmsg"><svg class="i16"><use href="#arrdown"/></svg>New messages</div>
        </div>
        <div class="compose"><p>Type a message</p><div><svg class="i17"><use href="#fmt"/></svg><svg class="i17"><use href="#smile"/></svg><svg class="i16"><use href="#loop"/></svg><svg class="i17"><use href="#plus"/></svg><u></u><svg class="i17"><use href="#send"/></svg></div></div>
      </section>
    </div>
  </main>
</div>

<footer class="taskbar">
  <span class="st"><svg class="i17"><use href="#win"/></svg></span>
  <div class="wsearch"><svg class="i17"><use href="#wsearch"/></svg>Type here to search</div>
  <span class="tb"><i class="cort"></i></span><span class="tb"><svg class="i17"><use href="#tview"/></svg></span><span class="tb run"><svg class="i22"><use href="#folder"/></svg></span><span class="tb"><svg class="i24"><use href="#edge"/></svg></span><span class="tb"><svg class="i23"><use href="#store"/></svg></span><span class="tb"><svg class="i24 wide"><use href="#mail"/></svg></span><span class="tb run"><svg class="i24"><use href="#vs"/></svg></span><span class="tb run act"><svg class="i24"><use href="#chrome"/></svg><b>K</b></span><span class="tb run"><svg class="i22"><use href="#note"/></svg></span><span class="tb run"><svg class="i22"><use href="#photo"/></svg></span><span class="tb run"><svg class="i22"><use href="#ana"/></svg></span>
  <div class="tray"><svg class="i13 b2"><use href="#up"/></svg><svg class="i17"><use href="#net"/></svg><svg class="i17"><use href="#sound"/></svg><span class="eng">ENG</span><p>13:46<br>21-02-2025</p><svg class="i17 nb"><use href="#notif"/></svg><u></u></div>
</footer>
</body>
</html>
```
FILE: styles.css
```css
*{box-sizing:border-box}
body{margin:0;width:1920px;height:1080px;overflow:hidden;display:flex;flex-direction:column;font:13.2px "Open Sans","Noto Sans","Noto Sans CJK JP",sans-serif;color:#242424;background:#f5f5f5;white-space:nowrap}
p{margin:0}
.sprite{position:absolute;width:0;height:0}
svg{display:block;flex:none;fill:none;stroke:currentColor;stroke-width:1.2;overflow:visible}
.b2{stroke-width:1.9}.b3{stroke-width:2.8}
.i9{width:9px;height:9px}.i10{width:10px;height:10px}.i11{width:11px;height:11px}.i12{width:12px;height:12px}.i13{width:13px;height:13px}.i14{width:14px;height:14px}.i15{width:15px;height:15px}.i16{width:16px;height:16px}.i17{width:17px;height:17px}.i18{width:18px;height:18px}.i20{width:20px;height:20px}.i22{width:22px;height:22px}.i23{width:23px;height:23px}.i24{width:24px;height:24px}
.g4{margin-left:4px}.g6{margin-left:6px}.g7{margin-left:7px}.g8{margin-left:8px}.g9{margin-left:9px}.g10{margin-left:10px}.g11{margin-left:11px}.g12{margin-left:12px}.g13{margin-left:13px}.g15{margin-left:15px}.g17{margin-left:17px}.g19{margin-left:19px}.g21{margin-left:21px}.g22{margin-left:22px}.g111{margin-left:111px}.g323{margin-left:323px}
.grow{flex:1}

/* browser */
.tabstrip{height:40px;flex:none;background:#d3e3fd;display:flex;padding-left:6px}
.tab-menu{width:28px;height:28px;margin:6px 4px 0 0;border-radius:10px;background:#e9f1fe;display:grid;place-items:center;color:#1f1f1f}
.tab{width:207.8px;height:34px;margin-top:6px;padding:0 14px 6px 10px;display:flex;align-items:center;gap:8px;font-size:11.4px;color:#3c4043;position:relative}
.tab .title{flex:1;min-width:0;overflow:hidden;margin-right:2px;letter-spacing:-.12px;mask-image:linear-gradient(90deg,#000 86%,transparent)}
.tab .i13{margin-right:1px}
.tab::after{content:"";position:absolute;right:0;top:6px;width:2px;height:16px;background:#a8c7fa}
.tab.nosep::after,.tab.active::after{display:none}
.tab.active{width:202.8px;margin-left:3px;margin-right:2px;padding:0 11px 6px 8px;background:#fff;border-radius:10px 10px 0 0;color:#1f1f1f}
.tab.active::before{content:"";position:absolute;left:-10px;right:-10px;bottom:0;height:10px;background:radial-gradient(circle at 0 0,transparent 9.500px,#fff 10px) left/10px 10px no-repeat,radial-gradient(circle at 100% 0,transparent 9.500px,#fff 10px) right/10px 10px no-repeat}
.tab.active .title{margin-right:0}
.newtab{margin:14px 0 0 10px;color:#333}
.winbtns{margin-left:auto;display:flex;gap:34px;padding:14px 16px 0 0;color:#111}
.toolbar{height:47px;flex:none;background:#fff;border-bottom:1px solid #ddd;border-radius:8px 8px 0 0;display:flex;align-items:center;box-shadow:0 -8px 0 -8px #d3e3fd}
.nav{display:flex;gap:22px;padding-left:15px;width:120px;color:#3c4043}.nav .dim{color:#b0b3b7}
.omnibox{width:1627px;height:34px;border-radius:17px;background:#ecf0fa;display:flex;align-items:center;padding:0 15px 0 5px;gap:16px;color:#444}
.site{width:24px;height:24px;border-radius:50%;background:#fff;display:grid;place-items:center}
.url{margin-left:-8px;font-size:13.350px;color:#1f1f1f}.url i{font-style:normal;color:#5f6368}
.verify{margin-left:10px;width:119px;height:34px;border-radius:17px;background:#d3e3fd;display:flex;align-items:center;gap:6px;padding-left:10px;font-size:11.400px;color:#0b2a5c}
.kring{width:20px;height:20px;border-radius:50%;border:1.500px dashed #4a75b8;display:grid;place-items:center}
.kring b{width:15px;height:15px;border-radius:50%;background:#c2185b;color:#fff;font:8px/15px "Open Sans",sans-serif;text-align:center}
.kebab{margin-left:15px}
.teamsbar{height:49px;flex:none;background:#ebebeb;border-bottom:1px solid #cfcfcf;display:flex;align-items:center}
.waffle{margin-left:26px}.tlogo{margin-left:28px}
.tsearch{margin-left:488px;width:762px;height:34px;border:1px solid #ddd;border-radius:5px;background:#fafafa;display:flex;align-items:center;gap:19px;padding-left:28px;color:#616161}
.tdots{margin-left:504px;color:#444}
.me{margin-left:20px;width:28px;height:28px;border-radius:50%;background:#e6ecdc;font:600 11px/28px "Open Sans",sans-serif;text-align:center;color:#5a6e42;position:relative}
.me i{position:absolute;right:0;bottom:0;width:10px;height:10px;border-radius:50%;background:#d13438}
.notice{height:35px;flex:none;border-bottom:1px solid #cfcfcf;display:flex;align-items:center;padding-left:14px;gap:10px}
.notice button{margin-left:auto;width:64px;height:24px;padding:0;border:1px solid #d1d1d1;border-radius:4px;background:#fff;font:11.500px "Open Sans",sans-serif;color:#242424}
.notice>svg:last-child{margin:0 16px 0 6px;stroke-width:1.300}
.app{flex:1;display:flex;min-height:0}
.rail{width:68px;background:#ebebeb;border-right:1px solid #ddd;padding-top:10px;color:#616161}
.rail a{display:flex;flex-direction:column;align-items:center;height:56px;font-size:9.900px;line-height:14px;gap:5px;position:relative}
.rail a svg{stroke-width:1.400}
.rail a.od{gap:4px}
.rail a.more{padding-top:8px}
.rail a b{position:absolute;left:36px;top:-5px;width:16px;height:16px;border-radius:50%;background:#da3b01;color:#fff;font:700 10px/16px "Open Sans",sans-serif;text-align:center}
.meeting{flex:1;display:flex;flex-direction:column;min-width:0}
.callbar{height:61px;flex:none;background:#fff;border-bottom:1px solid #dedede;display:flex;align-items:center}
.shield{margin-left:14px}.timer{margin-left:13px;width:70px;color:#424242;letter-spacing:-.05px}
.ctl{width:56.200px;height:60px;display:flex;flex-direction:column;align-items:center;font-size:10.400px;line-height:14px;color:#424242;padding-top:12px;gap:5px;position:relative}
.ctl>svg{height:20px}
.take{margin-left:985px;width:68.500px}
.on::after{content:"";position:absolute;left:5px;right:5px;bottom:1px;height:3px;border-radius:2px;background:#5b5fc7}
.pp{display:flex;gap:2px;align-items:center;height:20px}.pp b{font-size:12px;font-weight:600}
.vr{width:1px;height:32px;background:#ddd;margin-left:6px}
.off,.chev{color:#bdbdbd}
.cam{margin-left:7px;width:60px}.mic{margin-left:14px;width:40px}.c2{margin-left:12px}
.sh{margin-left:9px;width:50px}.shi{color:#242424}
.leave{margin-left:13px;width:93px;height:32px;border-radius:4px;background:#d13438;color:#fff;font-weight:600;display:flex;align-items:center;gap:7px;padding-left:15px}
.body{flex:1;display:flex;min-height:0}
.stage{width:1532px;display:flex;padding:43px 0 0 5px}

/* shared browser window */
.left{width:1282px}
.shared{height:721px;background:#f7f7f7;display:flex;flex-direction:column;color:#444}
.etabs{height:28px;background:#e7e7e7;display:flex;align-items:center;font-size:10px;letter-spacing:-.1px;color:#555}
.face{width:37px;padding-left:8.500px}.face svg{width:20px;height:20px;stroke:none}
.w30{width:30px;display:grid;place-items:center}.w42{width:42px;padding-left:13px}.blk{color:#111}
.etab{width:199.800px;height:28px;display:flex;align-items:center;padding:0 8px 0 6px;gap:7px;background:linear-gradient(#999,#999) 0 50%/1px 16px no-repeat}
.etab span{flex:1;min-width:0;overflow:hidden}.etab.fade span{letter-spacing:-.2px;mask-image:linear-gradient(90deg,#000 85%,#0006)}
.etab.cur{background:#f7f7f7;border-radius:6px 6px 0 0}
.eplus{margin-left:12px}
.ewin{margin-left:auto;display:flex;gap:27.500px;padding-right:13px;color:#999}
.eaddr{height:35px;display:flex;align-items:center;color:#333}
.eback{margin:0 22px 0 16px;color:#ccc}
.epill{margin-left:15px;width:1007px;height:27px;border:1px solid #d5d5d5;border-radius:14px;background:#fff;display:flex;align-items:center;padding:0 11px 0 15px;font-size:11.150px;color:#222}
.epill .i14,.epill em,.epill .z,.epill .i15{color:#888}
.epill em{font-style:normal;margin-left:6px}.epill s{width:1px;height:13px;background:#888;margin:0 11px 0 8px}
.epill .z{margin:0 20px 0 auto}
u{width:1px;height:13px;background:#ccc;flex:none}
.doc{margin:0 3px;height:622px;display:grid;grid-template:33px 576px 13px/1263px 13px;border:1px solid #e6e6e6;border-width:0 1px 1px;border-radius:8px;overflow:hidden;background:#fcfcfc}
.ptools{background:#f7f7f7;border-bottom:2px solid #e2e2e2;display:flex;align-items:center;font-size:11.200px}
.ptools svg{width:20px;height:14px}.ptools .tiny{width:10px;height:8px}
.draw{width:39px}.trans{width:20px;letter-spacing:-.8px;font-size:11px}
.ask{width:60px}.pg{width:34px;height:28px;border:1px solid #ccc;background:#fff;line-height:26px;text-align:center;border-radius:2px}.of{width:20px;letter-spacing:-.3px}.fainti{color:#bbb}
.vscroll{grid-row:1/3;grid-column:2;display:flex;flex-direction:column;align-items:center;padding:7px 3px 0 0}
.vscroll b{width:7px;height:218px;border-radius:4px;background:#8a8a8a;margin:11px 0 auto}
.ua,.da{border:4px solid transparent;border-top:0;border-bottom:5px solid #8a8a8a}.da{border-bottom:0;border-top:5px solid #8a8a8a;margin-bottom:8px}
.page{position:relative;background:#fff;grid-row:2;overflow:hidden}
.hscroll{display:flex;align-items:center;padding-left:6px;grid-row:3}
.hscroll b{width:558px;height:7px;border-radius:4px;background:#8a8a8a;margin:0 343px 0 338px}
.la,.ra{border:4px solid transparent;border-left:0;border-right:5px solid #777}.ra{border-right:0;border-left:5px solid #777}
.band{position:absolute;left:22px;top:305px;width:1225px;height:271px;background:#ebebeb}
.wires{position:absolute;left:0;top:0}
.nd{position:absolute;width:143px;height:42px;border:2.200px solid #111;border-radius:15px;display:grid;place-items:center;text-align:center;font:500 8.900px/12px Inter,"Open Sans",sans-serif;letter-spacing:-.02px;color:#3a3a3a}
.nd b{color:#111}
.n1{left:530px;top:44px;height:43px}.n2{left:530px;top:152.500px}.n3{left:530px;top:228.500px}
.n4{left:30.500px;top:411.500px}.n5{left:200.500px;top:411.500px}.n6{left:371px;top:412.500px}.n7{left:541.500px;top:411.500px}.n8{left:712px;top:411.500px}.n9{left:882.500px;top:412.500px}.n10{left:1058.500px;top:412.500px}
.n11{left:92px;top:517.500px}.n12{left:264px;top:517.500px}.n13{left:811px;top:517.500px}.n14{left:954px;top:517.500px}
.cursor{position:absolute;left:712px;top:354px;width:9px;height:14px}
.ibar{margin-top:auto;height:33px;background:linear-gradient(90deg,#d6d6d5 50%,#e2dcd5 66%,#dddad6 72%,#d8d6d3);display:flex;align-items:center;color:#222}
.ibar>span{width:41.500px;height:33px;display:grid;place-items:center;position:relative}
.ibar .istart{width:41px;color:#000}
.ul::after{content:"";position:absolute;left:4px;right:3px;bottom:0;height:2px;background:#0f6cbd}
.lit{background:linear-gradient(#cfd1d3,#cfd1d3) 50%/34px 100% no-repeat}.lit2{background:linear-gradient(#f1f1f1,#f1f1f1) 50%/38px 100% no-repeat}
.minib{position:absolute;left:11px;bottom:6px;width:9px;height:7px}
.lit2 b{position:absolute;left:20px;bottom:4px;width:13px;height:13px;border-radius:50%;background:#cc2f1b;color:#fff;font:9px/13px "Open Sans",sans-serif;text-align:center}
.isearch{width:239px;height:32px;background:#fff;display:flex;align-items:center;gap:9px;padding-left:9px;font-size:11.800px;color:#555}
.isearch span{margin:0 3px 0 auto;width:60px;height:26px;border-radius:5px;background:#f0f0f0;display:grid;place-items:center}.bf{width:26px;height:20px}
.itray{margin-left:auto;display:flex;align-items:center;gap:7px;border-right:1px solid #aaa;padding-right:16px;margin-right:3px;height:100%}
.itray p{width:52px;font-size:10.300px;line-height:16px;text-align:center;letter-spacing:-.3px;margin:-1px 0 0 -5px}.nf{color:#000;margin-left:5px}
.tags{display:flex;gap:8px;padding:7px 0 0 8px}
.who,.zm{height:24px;border-radius:4px;background:#797979;color:#fff;font:600 11.200px/24px "Open Sans",sans-serif;text-align:center;width:137px;letter-spacing:-.25px}
.zm{width:66px;display:flex;align-items:center;gap:18px;padding-left:11px}.dim2{color:#aaa}

/* participant tiles */
.tiles{margin:52px 0 0 4px;width:236px;display:grid;grid-template-columns:116px 116px;gap:4px;grid-template-rows:repeat(5,86px) 32px 131px;align-content:start}
.tile{border:1px solid #d3d6d6;border-radius:6px;display:grid;place-items:center;position:relative;height:86px}
.tile span{width:49px;height:49px;border-radius:50%;font:600 20px/48px "Open Sans",sans-serif;text-align:center;box-shadow:0 1px 3px #0002}
.tile i{position:absolute;left:3px;bottom:3px;width:28px;height:24px;border-radius:4px;background:#757575;color:#fff;display:grid;place-items:center}
.tile i svg{width:14px;height:15px}
.t1{border:3px solid #5b5fc7;background:linear-gradient(120deg,#f5e8dd,#f4e0ee 55%,#eee3f4)}.t1 span{background:#ead3e2;color:#6b2455}
.t2{background:linear-gradient(to bottom left,#e1f1f2,#eef2ee 45%,#f2f1e8)}.t2 span{background:#f1d3cc;color:#7a2414}
.t3{background:linear-gradient(160deg,#eaf0d9,#f0f2e6 45%,#e4f3ea)}.t3 span{background:#fbddd7;color:#8e3a2e}
.t4{background:linear-gradient(160deg,#f7eee2,#f2efdc 50%,#e1eff3)}.t4 span{background:#c5d3e7;color:#12306a}
.t5{background:linear-gradient(160deg,#f6e7e7,#f0eee6 55%,#e8f1ea)}.t5 span{background:#e5ecdc;color:#53653a}
.t6{background:linear-gradient(160deg,#f4e5ef,#f6e6ea 50%,#f3efe8)}.t6 span{background:#fce9d4;color:#8b5524}
.t7{background:linear-gradient(20deg,#efdff3,#e6e5f2 50%,#e0f2ed)}.t7 span{background:#dbf0f2;color:#3b7173}
.t8{background:linear-gradient(200deg,#e3ebf5,#eeeef2 55%,#f1e9ef)}.t8 span{background:#cde0d5;color:#204f36}
.t9{grid-column:1/3;width:116px;justify-self:center;background:linear-gradient(150deg,#e5e4f3,#e9eaf4 60%,#e9f1f2)}.t9 span{background:#fcecc5;color:#81631a}
.pager{grid-column:1/3;height:31px;display:flex;align-items:center;justify-content:center;gap:11px;font-size:13.500px}.dim3{color:#bbb}
.t10{grid-column:1/3;height:131px;background:linear-gradient(165deg,#e3f4ed,#edeef1 42%,#f1f2eb)}
.t10 span{width:65px;height:65px;font-size:26px;line-height:64px;background:#e5ecdc;color:#4f6136;box-shadow:none}.t10 i{left:7px;bottom:7px}

/* chat pane */
.chat{flex:1;background:#fff;border-left:1px solid #ddd;display:flex;flex-direction:column}
.chead{height:60px;flex:none;display:flex;align-items:center;justify-content:space-between;padding:3px 28px 0 20px;font-size:15.200px;font-weight:700;border-bottom:1px solid #ddd}
.banner{height:63px;flex:none;background:#f0f0f0;border:1px solid #dcdcdc;display:flex;align-items:center;justify-content:space-between;padding:0 8px 0 16px;font-size:11.400px;line-height:17px;color:#424242}.banner a{color:#4f52b2}
.msgs{height:544px;flex:none;overflow:hidden;position:relative;padding-left:30px}
.msg{position:relative}.first{margin-top:-26px}
.bub{width:112px;height:36px;border-radius:6px;background:#f5f5f5;padding:0 0 0 16px;line-height:34px}
.long{width:221px;height:400px;padding-top:7px;line-height:20px}
.av{position:absolute;left:-16px;top:2px;width:28px;height:28px;border-radius:50%;font:600 11px/27px "Open Sans",sans-serif;text-align:center}
.pk{background:#fbddd7}.pk2{background:#f1d3cc;color:#8a4234}.gr{background:#d0eadc;color:#2b6f4b}
.by{height:30px;padding-top:12px;line-height:18px;font-size:11.300px;color:#707070}.by time{margin-left:11px}
.lastread{height:40px;display:flex;align-items:center;justify-content:space-between;margin-left:-16px;width:291px;color:#5b5fc7;font-weight:700;font-size:11.200px}
.lastread::before,.lastread::after{content:"";width:100px;height:1px;background:#5b5fc7}
.by.ext{height:18px;padding-top:0}.ext time{margin-left:9px}
.newmsg{position:absolute;left:164px;bottom:0;width:135px;height:28px;border-radius:4px;background:#5b5fc7;color:#fff;font-weight:700;font-size:13px;display:flex;align-items:center;gap:8px;padding-left:8px;letter-spacing:-.2px}
.compose{margin:32px 0 0 14px;width:291px;height:85px;border:1px solid #ddd;border-radius:5px;padding:11px 13px;color:#707070;line-height:18px;font-size:13px}
.compose div{display:flex;align-items:center;justify-content:flex-end;gap:15px;margin-top:20px;height:24px;color:#424242}.compose u{height:24px;margin:0 -3px}

/* system taskbar */
.taskbar{height:40px;flex:none;background:linear-gradient(90deg,#20363f,#20343f 40%,#1c2a3f 75%,#1a2743);display:flex;color:#fff}
.st{width:48px;display:grid;place-items:center}
.wsearch{width:344px;background:#f2f2f2;border:1px solid #c4c4c4;color:#333;display:flex;align-items:center;gap:11px;padding-left:11px;font-size:13.900px}
.tb{width:49px;display:grid;place-items:center;position:relative}
.run::after{content:"";position:absolute;left:5px;right:4px;bottom:0;height:2px;background:#76b9ed}
.act{background:linear-gradient(#4b5d66,#4b5d66) 2px 0/45px 100% no-repeat}.act::after{left:1px;right:2px}
.act b{position:absolute;left:23px;top:18px;width:15px;height:15px;border-radius:50%;background:#c2185b;font:8px/15px "Open Sans",sans-serif;text-align:center}
.cort{width:17px;height:17px;border:2.500px solid #fff;border-radius:50%}
.wide{height:22px}
.tray{margin-left:auto;display:flex;align-items:center}
.tray .i17{margin-left:8px}.tray .i17+.i17{margin-left:7px}.eng{margin-left:9px;font-size:11.200px;width:25px;letter-spacing:-.2px}
.tray p{width:66px;margin-left:8px;text-align:center;font-size:11.200px;line-height:18px;letter-spacing:-.2px}
.tray .nb{margin:0 19px 0 13px}.tray u{height:40px;background:#8891a0;margin-right:4px}
```
